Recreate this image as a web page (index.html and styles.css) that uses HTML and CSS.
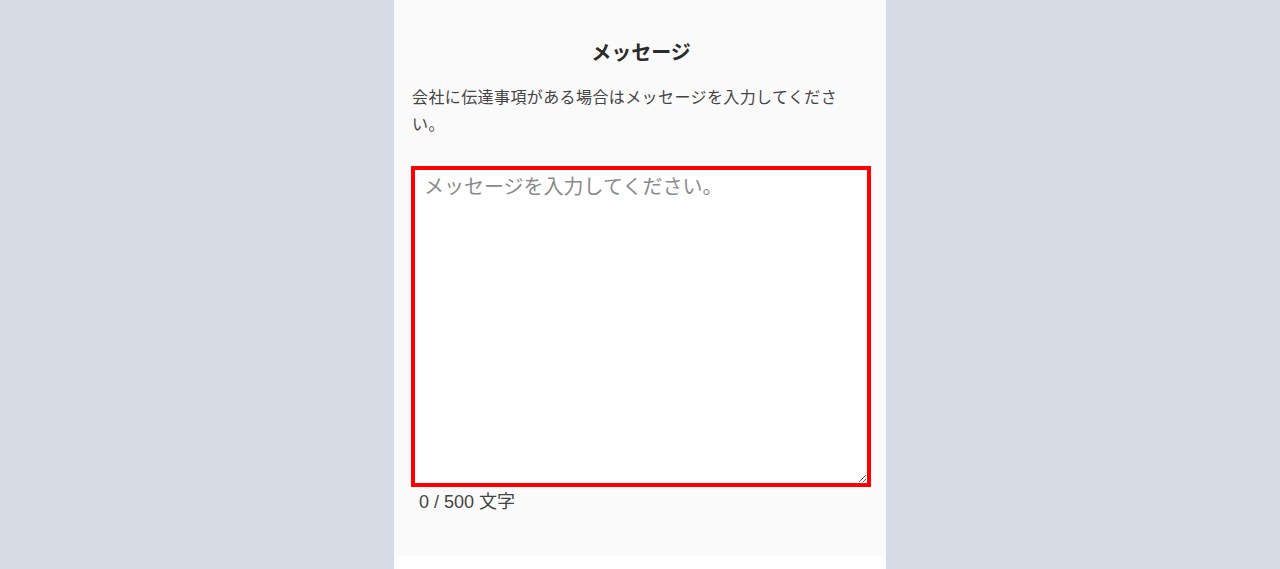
FILE: index.html
```html
<!DOCTYPE html>
<html lang="ja">
<head>
<meta charset="utf-8">
<title>メッセージ</title>
<link rel="stylesheet" href="styles.css">
</head>
<body>
<main class="page">
  <section class="panel">
    <h2 class="panel-title">メッセージ</h2>
    <p class="panel-desc">会社に伝達事項がある場合はメッセージを入力してください。</p>
    <textarea class="message-input" placeholder="メッセージを入力してください。"></textarea>
    <div class="counter">0 / 500 文字</div>
  </section>
  <div class="panel-foot"></div>
</main>
</body>
</html>
```
FILE: styles.css
```css
html, body {
  margin: 0;
  padding: 0;
}
body {
  background: #d5dce6;
  font-family: "Liberation Sans", "Noto Sans CJK JP", sans-serif;
  color: #333;
}
.page {
  width: 492px;
  margin: 0 auto;
  display: flex;
  flex-direction: column;
}
.panel {
  background: #fafafa;
  padding: 38px 15px 40px 17px;
  display: flex;
  flex-direction: column;
  height: 556px;
  box-sizing: border-box;
}
.panel-title {
  margin: 0;
  font-size: 20px;
  line-height: 30px;
  font-weight: bold;
  text-align: center;
  color: #2b2b2b;
}
.panel-desc {
  margin: 16px 0 0;
  padding: 0 24px 0 1px;
  font-size: 16px;
  letter-spacing: 0.4px;
  line-height: 27px;
  color: #444;
}
.message-input {
  margin: 28px 0 0;
  width: 460px;
  height: 321px;
  box-sizing: border-box;
  border: 4px solid #ff0000;
  background: #fff;
  padding: 3px 9px;
  font-family: "Liberation Sans", "Noto Sans CJK JP", sans-serif;
  font-size: 20px;
  line-height: 29px;
  color: #333;
  outline: none;
}
.message-input::placeholder {
  color: #8a8a8a;
}
.counter {
  margin-top: 2px;
  padding-left: 8px;
  font-size: 18px;
  line-height: 27px;
  color: #444;
}
.panel-foot {
  background: #fff;
  height: 40px;
}
```
